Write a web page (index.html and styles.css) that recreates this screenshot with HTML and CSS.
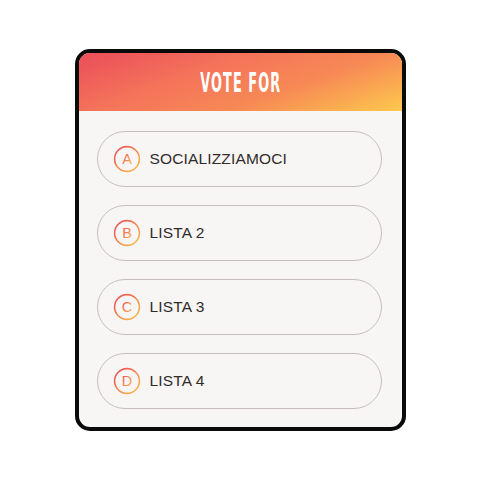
FILE: index.html
```html
<!DOCTYPE html>
<html>
<head>
<meta charset="utf-8">
<link rel="stylesheet" href="styles.css">
</head>
<body>
<div class="page">
  <div class="card">
    <div class="header"><span class="title">VOTE FOR</span></div>
    <div class="list">
      <div class="option">
        <svg class="badge" width="28" height="28" viewBox="0 0 28 28"><defs><linearGradient id="g1" x1="0" y1="0" x2="1" y2="1"><stop offset="0" stop-color="#e9475a"/><stop offset="1" stop-color="#fbc54c"/></linearGradient></defs><circle cx="14" cy="14" r="12.4" fill="none" stroke="url(#g1)" stroke-width="1.6"/><text x="14" y="19.2" text-anchor="middle" class="ltr" fill="url(#g1)">A</text></svg>
        <span class="label">SOCIALIZZIAMOCI</span>
      </div>
      <div class="option">
        <svg class="badge" width="28" height="28" viewBox="0 0 28 28"><circle cx="14" cy="14" r="12.4" fill="none" stroke="url(#g1)" stroke-width="1.6"/><text x="14" y="19.2" text-anchor="middle" class="ltr" fill="url(#g1)">B</text></svg>
        <span class="label">LISTA 2</span>
      </div>
      <div class="option">
        <svg class="badge" width="28" height="28" viewBox="0 0 28 28"><circle cx="14" cy="14" r="12.4" fill="none" stroke="url(#g1)" stroke-width="1.6"/><text x="14" y="19.2" text-anchor="middle" class="ltr" fill="url(#g1)">C</text></svg>
        <span class="label">LISTA 3</span>
      </div>
      <div class="option">
        <svg class="badge" width="28" height="28" viewBox="0 0 28 28"><circle cx="14" cy="14" r="12.4" fill="none" stroke="url(#g1)" stroke-width="1.6"/><text x="14" y="19.2" text-anchor="middle" class="ltr" fill="url(#g1)">D</text></svg>
        <span class="label">LISTA 4</span>
      </div>
    </div>
  </div>
</div>
</body>
</html>
```

FILE: styles.css
```css
html, body {
  margin: 0;
  padding: 0;
  background: #ffffff;
}
.page {
  padding: 49px 0 0 75px;
}
.card {
  width: 323px;
  height: 374px;
  border: 4px solid #0a0a0a;
  border-radius: 15px;
  overflow: hidden;
  background: #f8f6f4;
  display: flex;
  flex-direction: column;
}
.header {
  height: 58px;
  flex: none;
  background: linear-gradient(160deg, #ea4d5a 0%, #f4735a 35%, #f78a55 65%, #fdc94d 100%);
  display: flex;
  align-items: center;
  justify-content: center;
}
.title {
  display: inline-block;
  font-family: "DejaVu Sans Condensed", "DejaVu Sans", sans-serif;
  font-weight: bold;
  font-size: 26px;
  color: #ffffff;
  letter-spacing: 2px;
  transform: scaleX(0.55);
  line-height: 1;
  margin-top: 2px;
}
.list {
  display: flex;
  flex-direction: column;
  gap: 18px;
  padding: 20px 20px 0 18px;
}
.option {
  box-sizing: border-box;
  height: 56px;
  border: 1.5px solid #c6bebd;
  border-radius: 28px;
  display: flex;
  align-items: center;
  padding-left: 14.5px;
  gap: 9px;
}
.badge {
  flex: none;
  display: block;
}
.ltr {
  font-family: "Liberation Sans", Arial, sans-serif;
  font-size: 14.5px;
}
.label {
  font-family: "Liberation Sans", Arial, sans-serif;
  font-size: 15.5px;
  color: #312c2c;
  letter-spacing: 0.15px;
}
```
